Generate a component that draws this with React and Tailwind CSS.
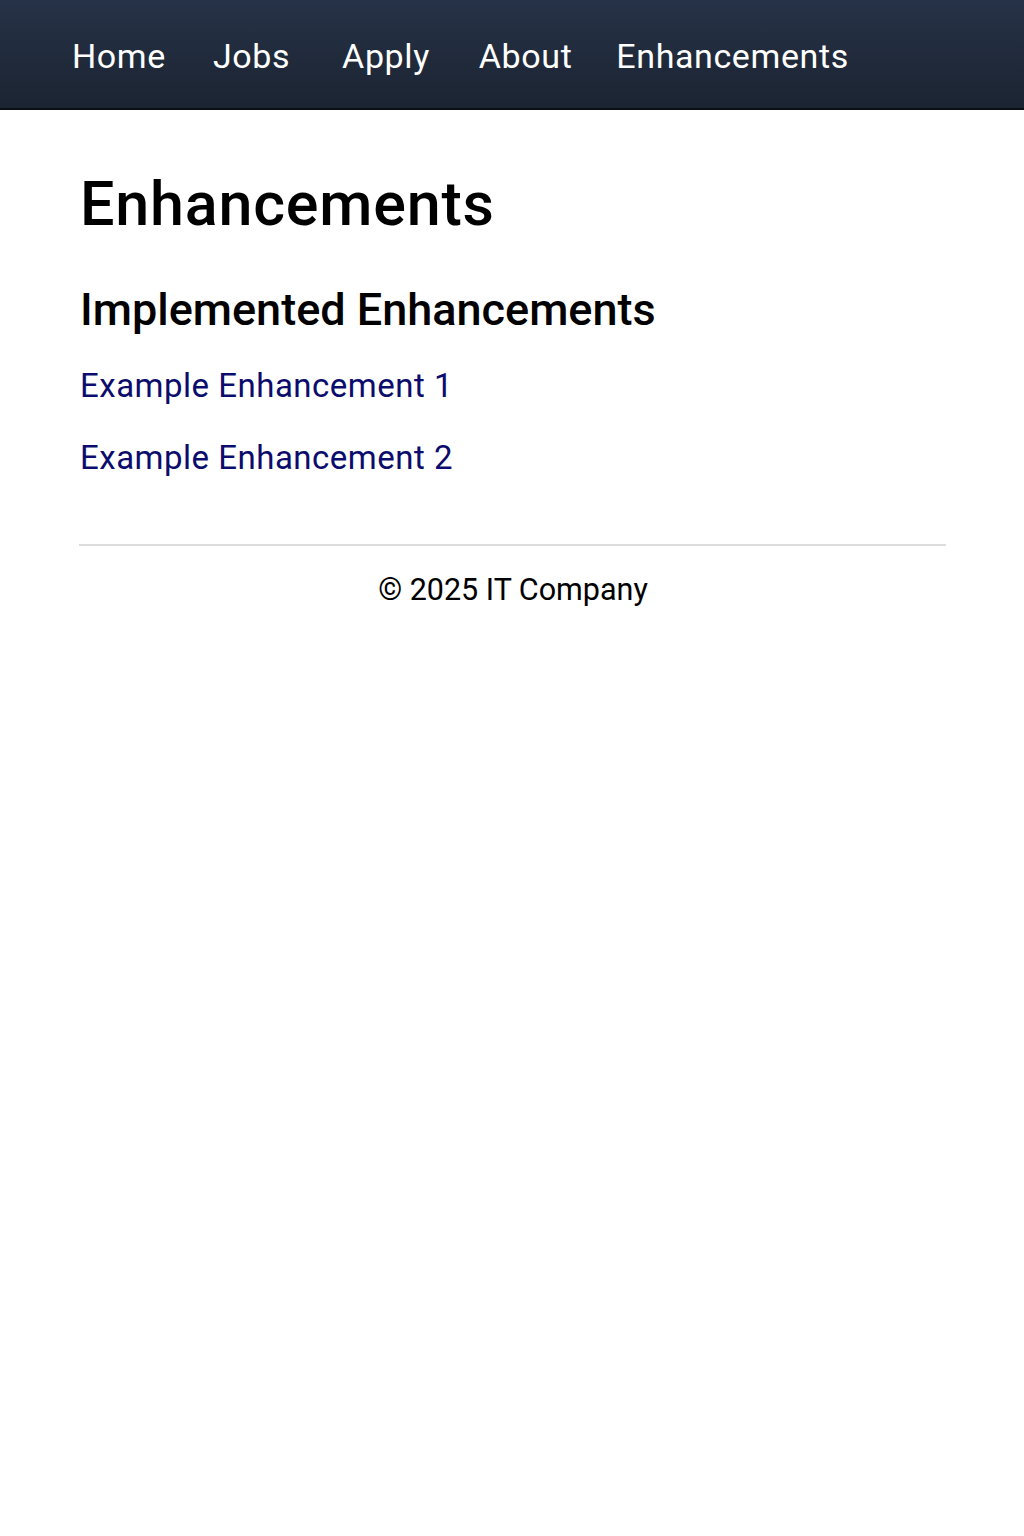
export default function App() {
  return (
    <div className="min-h-[1536px] bg-white" style={{ fontFamily: "Roboto, 'Liberation Sans', sans-serif" }}>
      <nav className="h-[110px] bg-gradient-to-b from-[#263247] to-[#1b2432] border-b-2 border-[#0a0d12] flex items-start pt-[39px] pl-[72px]">
        <a className="text-white text-[34px] leading-none tracking-[0.6px]">Home</a>
        <a className="text-white text-[34px] leading-none tracking-[0.6px] ml-[47px]">Jobs</a>
        <a className="text-white text-[34px] leading-none tracking-[0.6px] ml-[52px]">Apply</a>
        <a className="text-white text-[34px] leading-none tracking-[0.6px] ml-[49px]">About</a>
        <a className="text-white text-[34px] leading-none tracking-[0.6px] ml-[44px]">Enhancements</a>
      </nav>
      <main className="pl-20 pr-[78px]">
        <h1 className="text-[61px] font-medium text-black leading-none pt-[64px] tracking-[0.8px]">Enhancements</h1>
        <h2 className="text-[45px] font-medium text-black leading-none mt-[52px]">Implemented Enhancements</h2>
        <div className="mt-[37px] flex flex-col gap-[39px]">
          <a className="text-[33px] leading-none text-[#0c0c6c] tracking-[0.5px]">Example Enhancement 1</a>
          <a className="text-[33px] leading-none text-[#0c0c6c] tracking-[0.5px]">Example Enhancement 2</a>
        </div>
        <hr className="mt-[70px] -ml-px border-t-2 border-[#dddddd]" />
        <footer className="text-center text-[30.5px] leading-none text-black mt-[29px]">© 2025 IT Company</footer>
      </main>
    </div>
  );
}
